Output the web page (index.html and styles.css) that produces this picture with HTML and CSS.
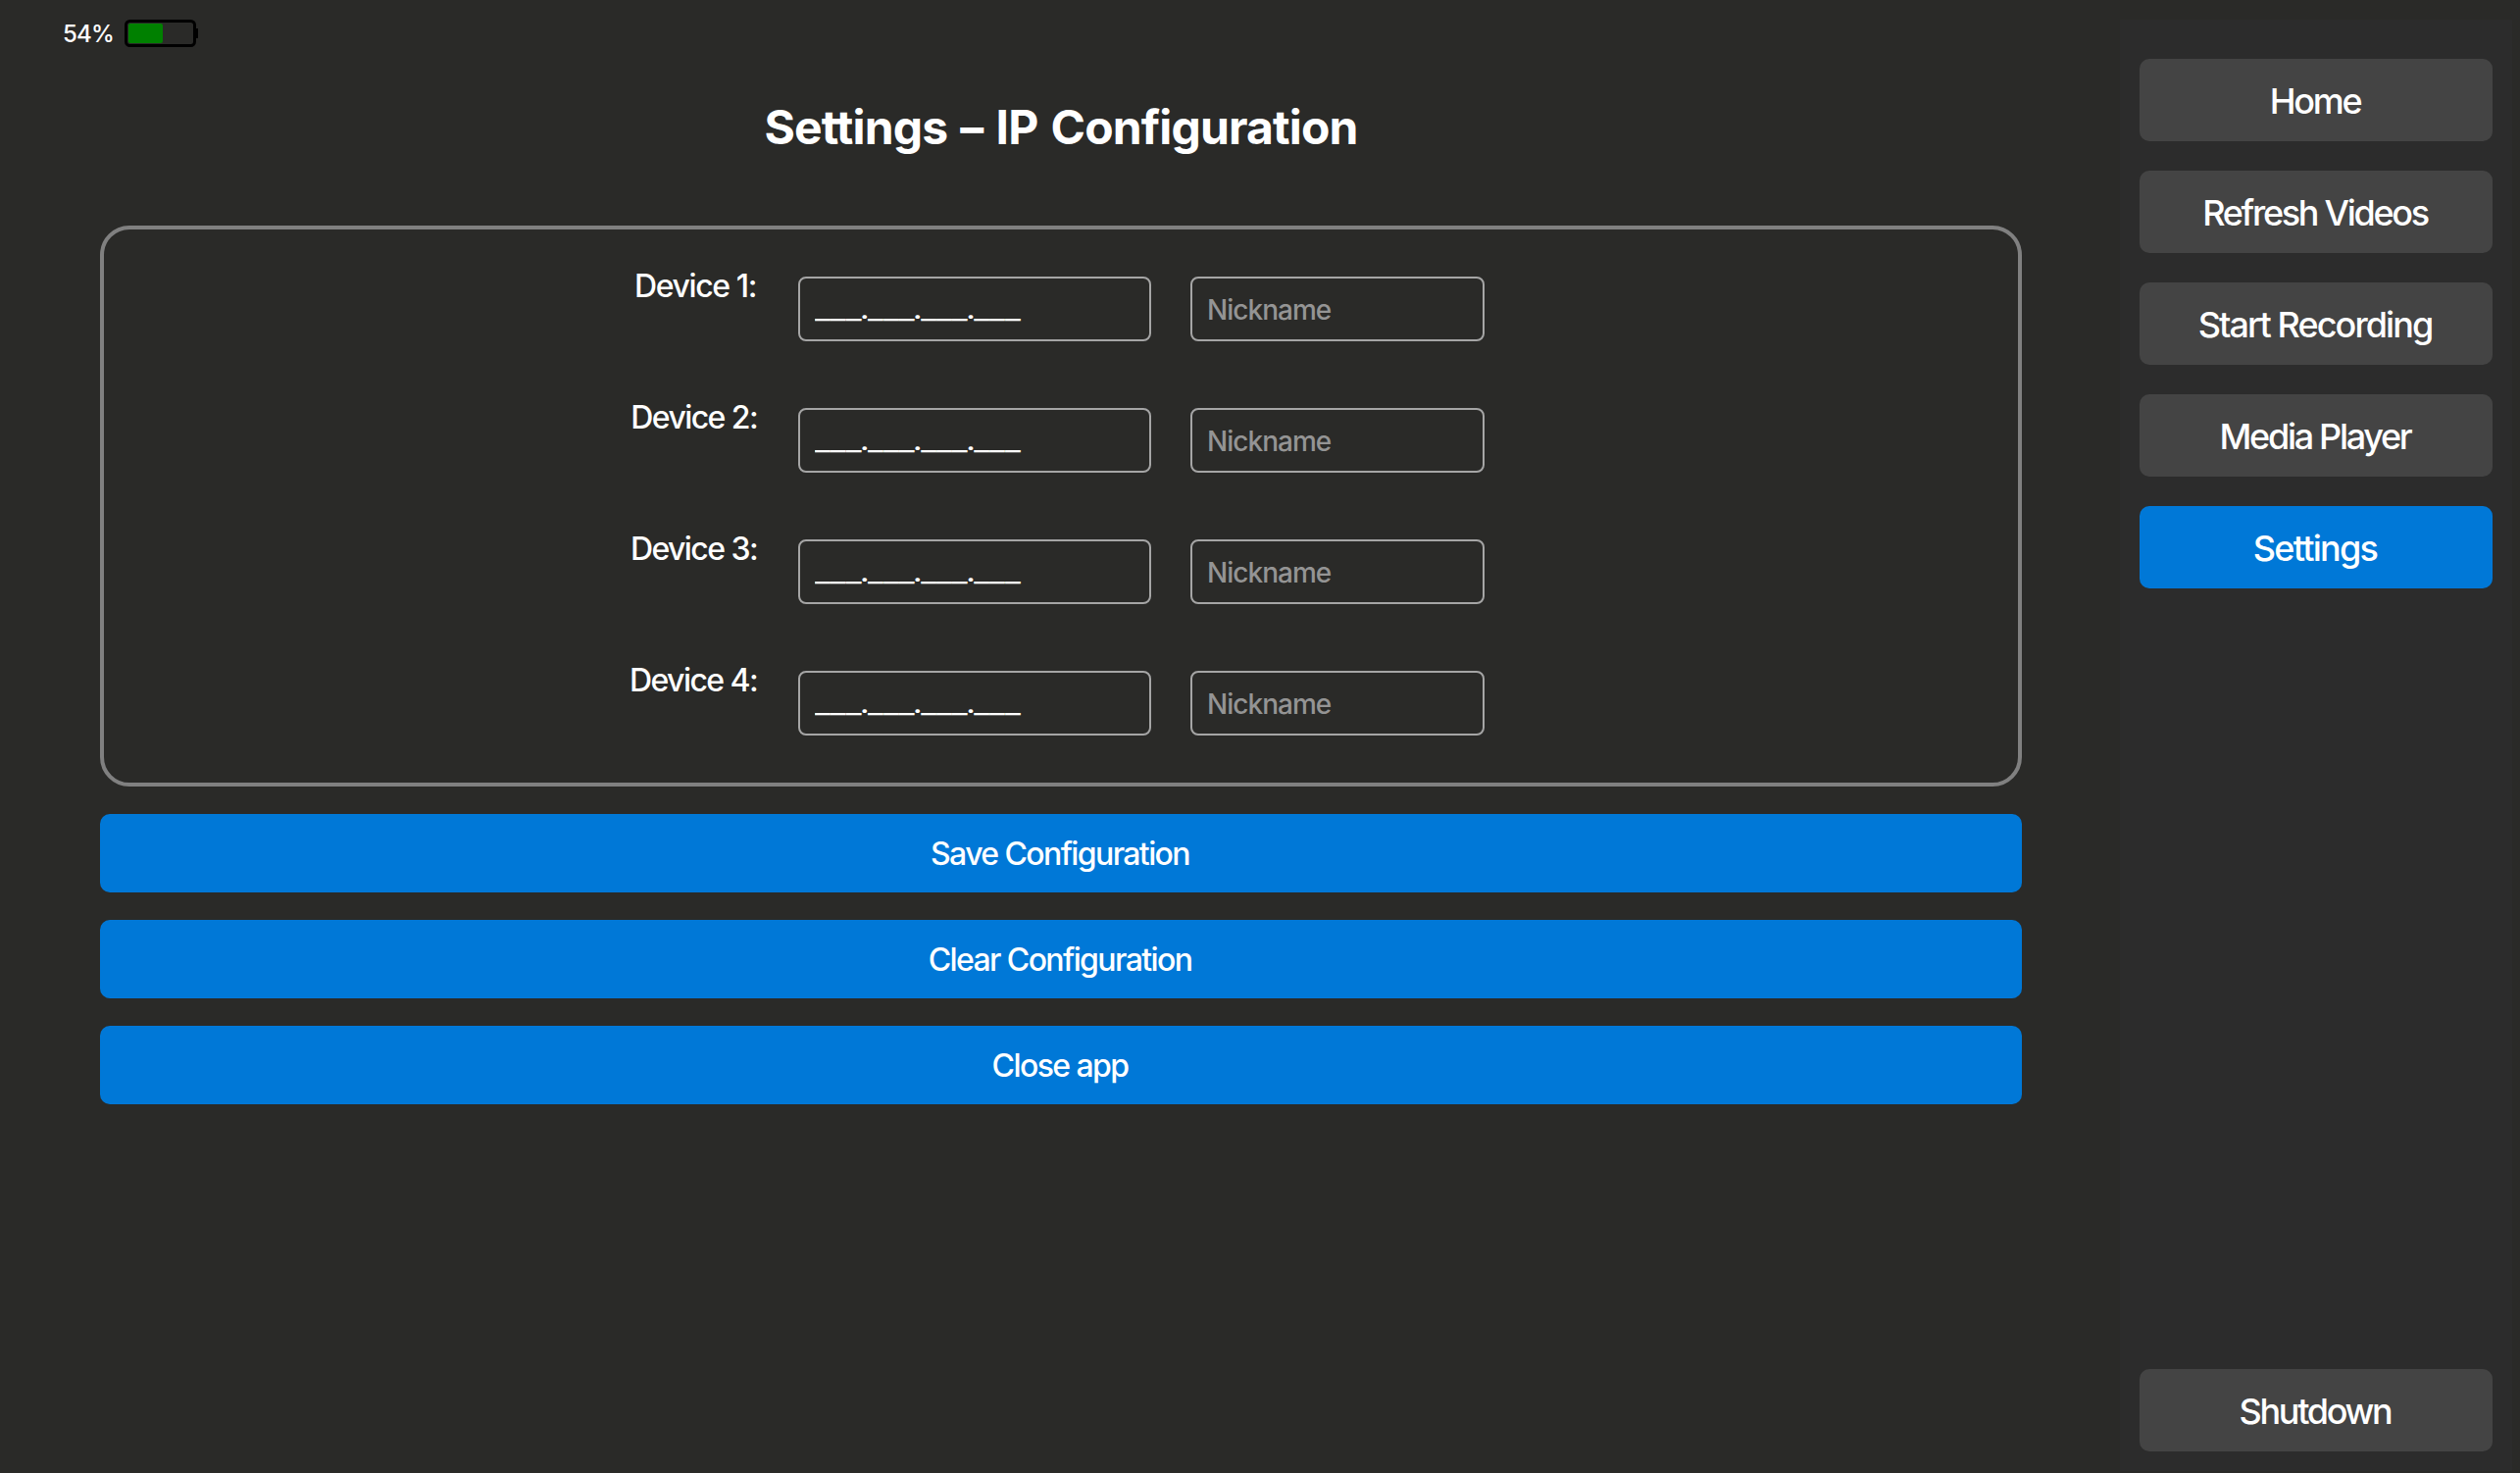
FILE: index.html
```html
<!DOCTYPE html>
<html lang="en">
<head>
<meta charset="utf-8">
<title>Settings – IP Configuration</title>
<link rel="stylesheet" href="styles.css">
</head>
<body>
<div class="app">
  <main class="main">
    <div class="status">
      <span class="status-text">54%</span>
      <svg class="battery" width="76" height="28" viewBox="0 0 76 28">
        <rect x="1.5" y="1.5" width="70" height="25" rx="4" fill="none" stroke="#000" stroke-width="3"/>
        <rect x="72" y="9" width="3" height="10" fill="#000"/>
        <rect x="4" y="4" width="35" height="20" rx="2" fill="#008000"/>
      </svg>
    </div>
    <h1 class="title">Settings – IP Configuration</h1>
    <section class="panel">
      <div class="row">
        <label class="label label-1">Device 1:</label>
        <div class="field ip"><span class="mask">___<span class="dot">.</span>___<span class="dot">.</span>___<span class="dot">.</span>___</span></div>
        <div class="field nickname">Nickname</div>
      </div>
      <div class="row">
        <label class="label">Device 2:</label>
        <div class="field ip"><span class="mask">___<span class="dot">.</span>___<span class="dot">.</span>___<span class="dot">.</span>___</span></div>
        <div class="field nickname">Nickname</div>
      </div>
      <div class="row">
        <label class="label">Device 3:</label>
        <div class="field ip"><span class="mask">___<span class="dot">.</span>___<span class="dot">.</span>___<span class="dot">.</span>___</span></div>
        <div class="field nickname">Nickname</div>
      </div>
      <div class="row">
        <label class="label">Device 4:</label>
        <div class="field ip"><span class="mask">___<span class="dot">.</span>___<span class="dot">.</span>___<span class="dot">.</span>___</span></div>
        <div class="field nickname">Nickname</div>
      </div>
    </section>
    <div class="actions">
      <button class="action">Save Configuration</button>
      <button class="action">Clear Configuration</button>
      <button class="action">Close app</button>
    </div>
  </main>
  <nav class="sidebar">
    <button class="nav-item">Home</button>
    <button class="nav-item">Refresh Videos</button>
    <button class="nav-item recording">Start Recording</button>
    <button class="nav-item">Media Player</button>
    <button class="nav-item active">Settings</button>
    <button class="nav-item shutdown">Shutdown</button>
  </nav>
</div>
</body>
</html>
```
FILE: styles.css
```css
* {
  box-sizing: border-box;
}

body {
  margin: 0;
  background: #2a2a28;
  color: #fff;
  font-family: Inter, "Liberation Sans", sans-serif;
  font-weight: 450;
}

button {
  border: 0;
  padding: 0 2px 0 0;
  color: #fff;
  font-family: inherit;
  font-weight: inherit;
}

.app {
  display: flex;
  width: 2570px;
  height: 1502px;
  padding: 0 8px 2px 0;
}

.main {
  width: 2162px;
  padding: 0 100px 0 102px;
}

.status {
  display: flex;
  align-items: center;
  gap: 10px;
  height: 68px;
  margin-left: -38px;
}

.status-text {
  width: 53px;
  font-size: 24px;
  font-weight: 500;
  letter-spacing: -0.8px;
}

.title {
  margin: 0 0 39px;
  text-align: center;
  font-size: 48px;
  font-weight: 700;
  line-height: 123px;
  letter-spacing: -0.86px;
  word-spacing: 2.6px;
}

.panel {
  display: flex;
  flex-direction: column;
  gap: 68px;
  padding: 48px 0;
  border: 4px solid #808080;
  border-radius: 30px;
}

.row {
  display: flex;
  gap: 40px;
  height: 66px;
  padding-left: 508px;
}

.label {
  width: 160px;
  padding-right: 2px;
  text-align: right;
  white-space: nowrap;
  font-size: 32px;
  line-height: 19px;
  letter-spacing: -1.58px;
}

.label-1 {
  padding-right: 3px;
  letter-spacing: -1.4px;
}

.field {
  display: flex;
  align-items: center;
  padding-left: 15px;
  border: 2px solid #a5a5a5;
  border-radius: 8px;
  font-size: 28px;
}

.ip {
  width: 360px;
}

.mask {
  white-space: nowrap;
  font-weight: 400;
  transform: scaleX(1.24);
  transform-origin: left;
}

.dot {
  margin: 0 -1.4px;
}

.nickname {
  width: 300px;
  padding-top: 2px;
  color: #949494;
  letter-spacing: -0.98px;
}

.actions {
  display: flex;
  flex-direction: column;
  gap: 28px;
  margin-top: 28px;
}

.action {
  height: 80px;
  border-radius: 10px;
  background: #0078d7;
  font-size: 32px;
  letter-spacing: -1.6px;
}

.sidebar {
  display: flex;
  flex-direction: column;
  gap: 30px;
  width: 400px;
  margin-top: 20px;
  padding: 40px 20px 20px;
  background: #2c2c2c;
}

.nav-item {
  height: 84px;
  padding-top: 2px;
  border-radius: 10px;
  background: #444;
  font-size: 36px;
  letter-spacing: -2.3px;
}

.recording {
  letter-spacing: -1.92px;
}

.active {
  background: #0078d7;
  letter-spacing: -1.75px;
}

.shutdown {
  margin-top: auto;
}
```
